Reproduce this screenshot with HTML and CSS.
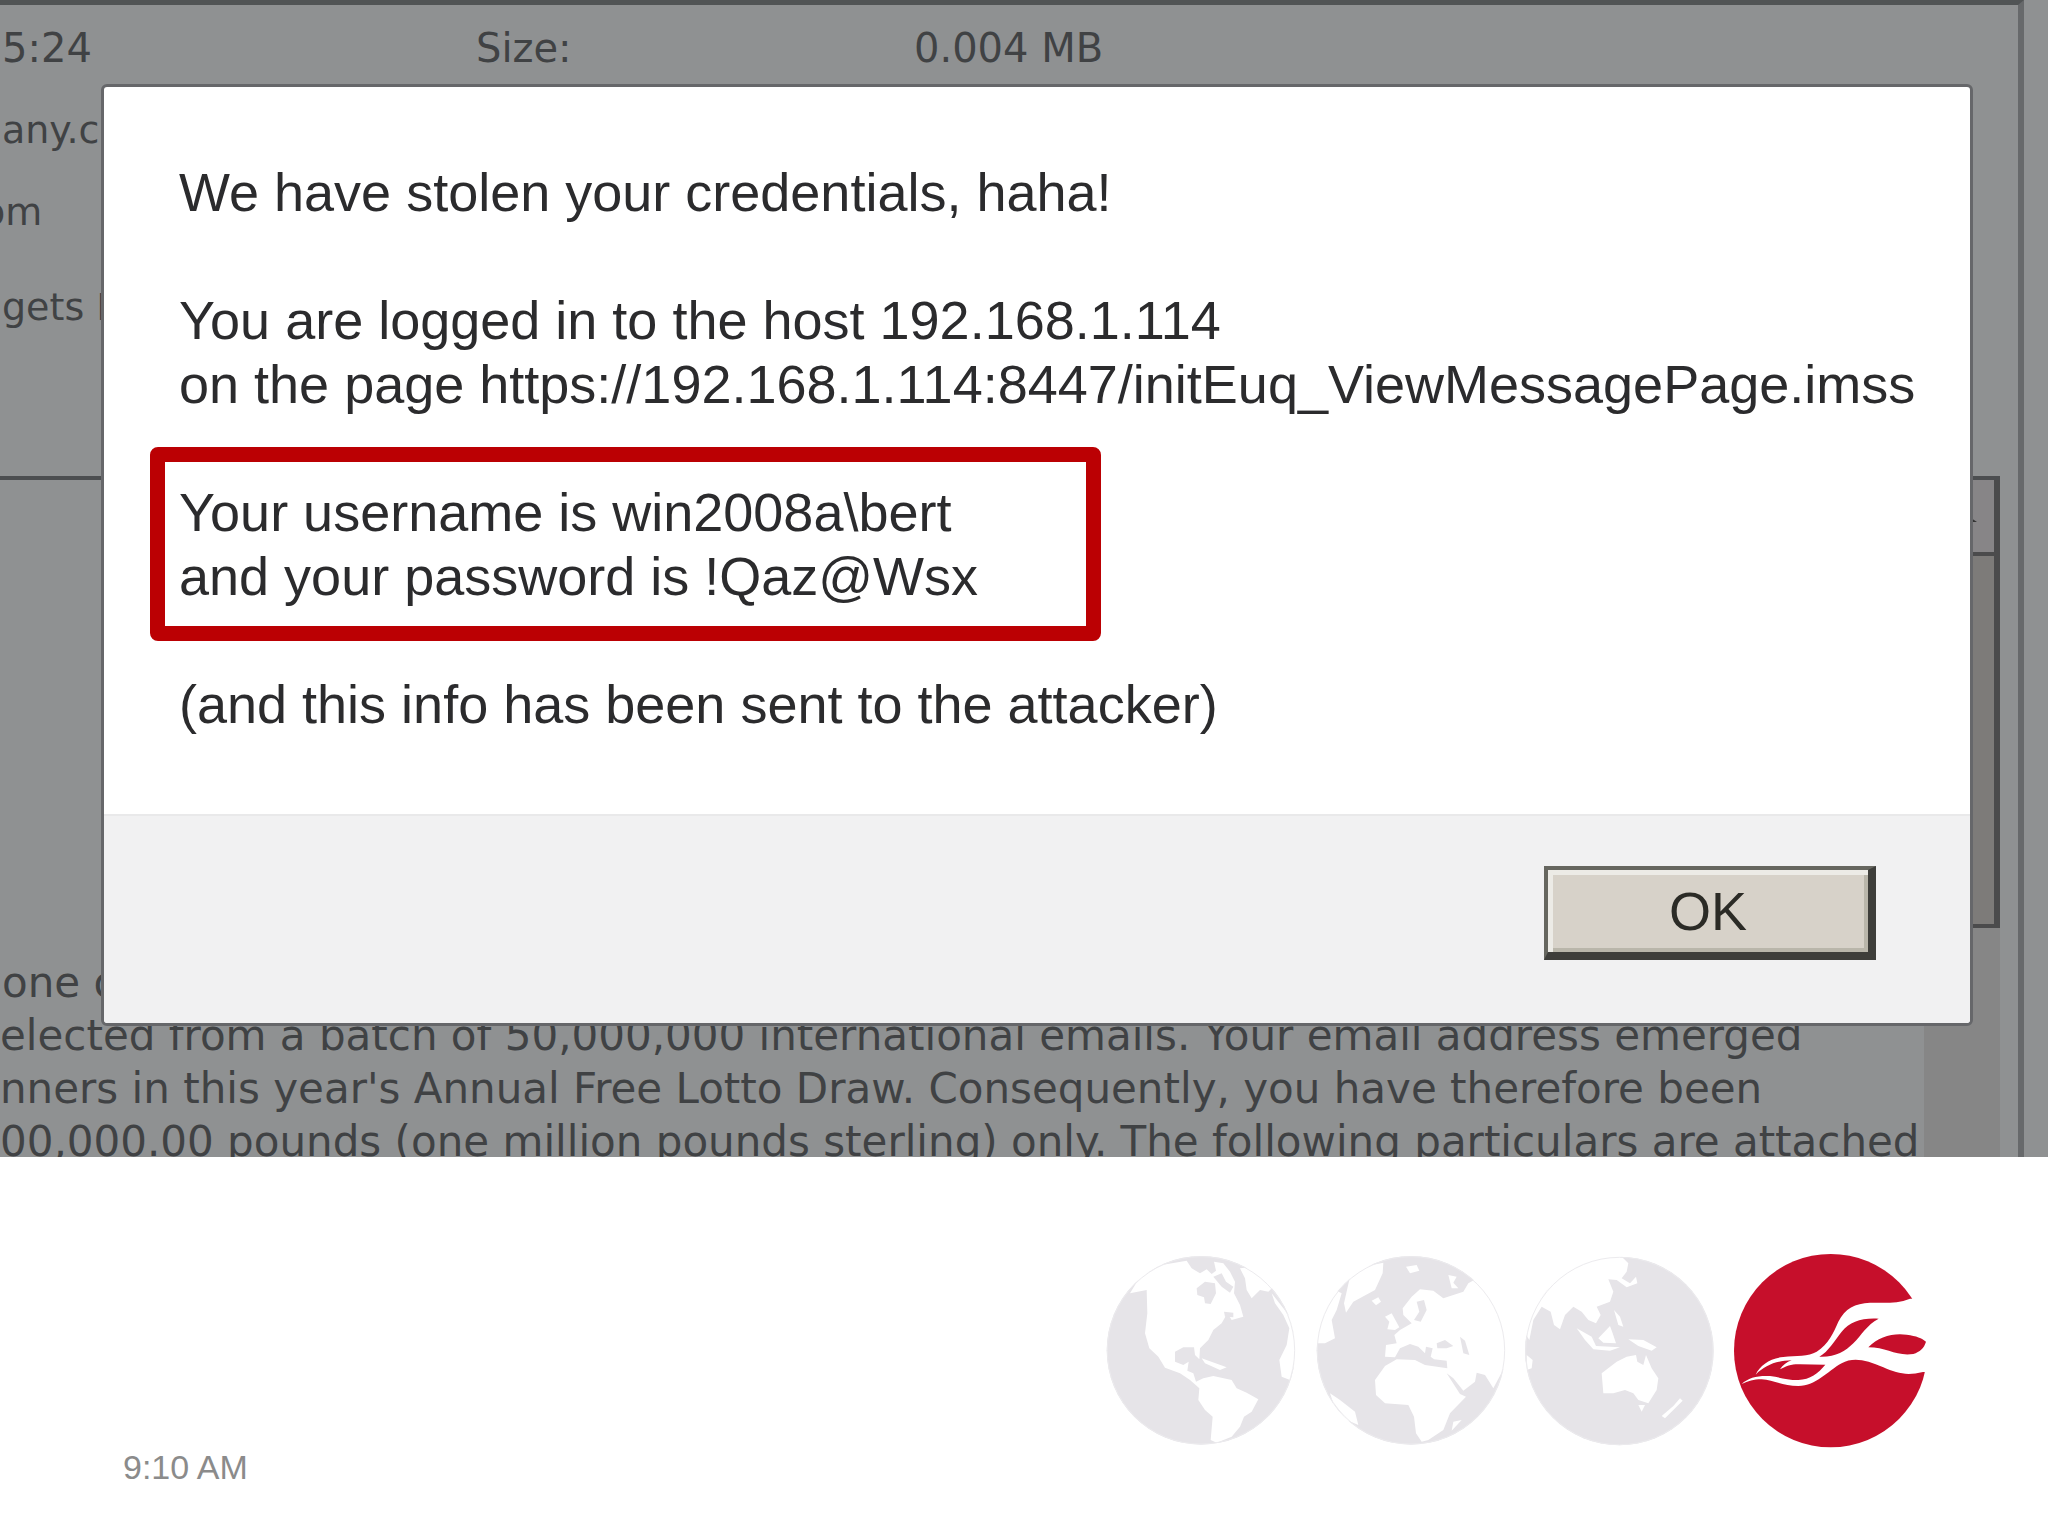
FILE: index.html
```html
<!DOCTYPE html>
<html lang="en">
<head>
<meta charset="utf-8">
<title>Stolen credentials</title>
<link rel="stylesheet" href="styles.css">
</head>
<body>
<main class="stage">
  <section class="mail" aria-label="Message">
    <div class="mail-frame">
      <div class="mail-head">
        <div class="row row-main"><span class="cell">5:24</span><span class="cell">Size:</span><span class="cell">0.004 MB</span></div>
        <div class="row">any.com</div>
        <div class="row row-cut">om</div>
        <div class="row row-tall">gets Inc</div>
      </div>
      <div class="mail-body">
        <div class="mail-text">
          <p class="line line-inset">one of</p>
          <p class="line">elected from a batch of 50,000,000 international emails. Your email address emerged</p>
          <p class="line">nners in this year's Annual Free Lotto Draw. Consequently, you have therefore been</p>
          <p class="line">00,000.00 pounds (one million pounds sterling) only. The following particulars are attached</p>
        </div>
        <div class="scroll">
          <div class="scroll-up"><svg class="arrow" viewBox="0 0 36 12"><path d="M0 12L18 0L36 12Z"/></svg></div>
          <div class="scroll-thumb"></div>
        </div>
      </div>
    </div>
  </section>

  <section class="dialog" role="alertdialog" aria-labelledby="msg">
    <div class="dialog-body">
      <p class="text" id="msg">We have stolen your credentials, haha!</p>
      <p class="text text-gap">You are logged in to the host 192.168.1.114<br>on the page https://192.168.1.114:8447/initEuq_ViewMessagePage.imss</p>
      <p class="marked">Your username is win2008a\bert<br>and your password is !Qaz@Wsx</p>
      <p class="text">(and this info has been sent to the attacker)</p>
    </div>
    <div class="dialog-foot"><button class="ok" type="button">OK</button></div>
  </section>
</main>

<footer class="foot">
  <time class="time">9:10 AM</time>
  <div class="globes">
    <svg class="globe" viewBox="15 15 630 630">
      <circle class="sea" cx="333" cy="331" r="283"/>
      <path class="land" d="M120 160L150 110L215 75L290 62L305 85L330 100L350 88L365 102L378 92L372 65L400 70L420 95L435 125L432 160L450 195L460 230L425 240L412 220L395 250L370 270L355 300L330 325L328 358L315 345L312 322L280 322L255 335L255 365L280 375L296 365L292 392L310 400L318 425L340 415L370 408L425 420L440 445L470 458L505 478L485 515L462 530L450 560L425 590L380 608L362 600L368 530L345 510L325 480L328 445L300 420L270 400L225 383L205 350L178 325L165 280L172 220L170 150Z"/>
      <path class="land" d="M450 85L500 80L550 140L535 155L510 150L485 175L470 150L465 115Z"/>
      <path class="land" d="M545 160L600 230L625 330L600 420L575 410L568 360L590 315L598 265L580 225L555 190Z"/>
      <path class="land" d="M335 355L410 382L390 390L345 370Z"/>
      <path class="sea" d="M320 145L345 125L375 130L378 160L362 192L345 190L342 172L322 165ZM370 110L395 100L408 125L430 140L420 158L395 140ZM402 215L430 218L430 232L405 230Z"/>
      <circle class="rim" cx="333" cy="331" r="281"/>
    </svg>
    <svg class="globe" viewBox="15 15 630 630">
      <circle class="sea" cx="333" cy="331" r="283"/>
      <path class="land" d="M250 68L248 100L225 150L160 185L138 218L132 190L150 110L190 80ZM318 80L350 75L358 92L330 100ZM215 182L235 172L243 185L228 196ZM105 150L125 160L110 210L95 240L105 295L75 310L45 310L60 220Z"/>
      <path class="land" d="M90 460L120 480L165 515L175 555L140 540L100 490Z"/>
      <path class="land" d="M255 230L275 220L298 262L285 270L262 268L268 245ZM540 110L505 130L490 155L430 175L400 152L360 148L335 170L308 205L310 225L335 250L300 270L283 285L290 310L258 315L255 350L285 352L300 325L330 312L355 320L375 340L378 320L398 325L392 350L402 358L440 362L442 385L375 375L345 360L290 358L255 378L225 420L228 465L255 490L325 495L342 530L348 580L365 605L385 600L430 570L450 520L498 470L480 462L440 400L460 415L490 452L525 425L530 398L555 405L580 445L620 370L620 280L590 190Z"/>
      <path class="land" d="M445 105L470 110L460 128L475 145L455 145ZM460 545L485 540L455 572Z"/>
      <path class="sea" d="M350 185L372 180L380 210L362 245L342 240L358 215ZM410 310L435 300L460 318L440 325L412 325ZM480 290L495 302L508 345L490 340Z"/>
      <circle class="rim" cx="333" cy="331" r="281"/>
    </svg>
    <svg class="globe" viewBox="15 15 630 630">
      <circle class="sea" cx="328" cy="333" r="283"/>
      <path class="land" d="M100 165L150 100L220 60L330 45L355 70L350 95L335 115L360 130L378 110L382 130L350 142L320 120L295 118L310 155L300 185L260 200L272 225L258 250L235 240L215 215L190 200L165 225L150 268L132 255L122 215L95 200L70 240L58 300L45 280L60 210Z"/>
      <path class="land" d="M200 265L245 290L258 318L330 322L300 332L250 328L225 300ZM265 295L300 258L308 280L318 310L280 308ZM312 210L330 230L340 260L325 255ZM355 298L400 300L440 322L425 332L385 318Z"/>
      <path class="land" d="M275 400L320 365L350 350L378 345L382 365L400 375L408 345L425 385L445 415L440 450L415 490L385 480L370 460L345 450L310 460L280 460ZM385 495L405 495L395 515ZM510 475L518 482L465 535L455 528L490 498ZM50 345L68 360L65 385L50 390Z"/>
      <circle class="rim" cx="328" cy="333" r="281"/>
    </svg>
    <svg class="globe" viewBox="15 15 630 630">
      <circle class="brand" cx="332" cy="332" r="290"/>
      <path class="cut" d="M65 432C85 412 115 406 150 408C180 412 200 420 235 420C270 418 295 400 316 374L240 373C215 372 200 378 180 388C187 376 200 366 215 361C170 362 135 375 107 404C120 376 150 355 190 351C230 346 265 350 290 335C325 312 340 280 355 245C375 205 405 190 450 188C490 188 530 192 570 176L655 176L655 398L609 396C560 408 530 400 490 382C440 360 400 350 365 370C320 395 290 437 235 438C190 438 160 420 125 418C100 418 85 424 65 432Z"/>
      <path class="brand" d="M298 350C325 335 345 300 365 275C390 245 425 233 476 236C440 255 425 285 400 310C375 335 345 352 298 350ZM445 322C475 290 520 278 560 284C590 288 605 294 618 305C612 325 600 335 580 342C530 350 500 322 445 322Z"/>
    </svg>
  </div>
</footer>
</body>
</html>
```
FILE: styles.css
```css
* { box-sizing: border-box; }
body {
  margin: 0;
  background: #fff;
  font-family: "Liberation Sans", Arial, sans-serif;
}
p { margin: 0; }

.stage { display: grid; overflow: hidden; }
.mail, .dialog { grid-area: 1 / 1; }

/* dimmed mail page behind the dialog */
.mail {
  display: flex;
  min-width: 0;
  height: 0;
  min-height: 100%;
  overflow: hidden;
  padding-right: 24px;
  background: #8f9192;
  color: #404244;
  font-family: "DejaVu Sans", Verdana, sans-serif;
  font-size: 38px;
  white-space: nowrap;
}
.mail-frame {
  flex: 1;
  min-width: 0;
  display: flex;
  flex-direction: column;
  padding-right: 18px;
  border-top: 5px solid #515455;
  border-right: 6px solid #67696b;
}
.mail-head { min-height: 471px; padding: 2px 0 0 2px; }
.row { line-height: 82px; }
.row-main { display: flex; font-size: 40px; }
.row-cut { text-indent: -20px; }
.cell { width: 438px; }
.cell:first-child { width: 474px; }
.row-tall { line-height: 108px; }
.mail-body {
  flex: 1;
  display: flex;
  min-height: 0;
  border-top: 4px solid #4c4e50;
}
.mail-text {
  flex: 1;
  min-width: 0;
  padding-top: 476px;
  font-size: 42px;
}
.line { line-height: 53px; }
.line-inset { padding-left: 2px; }
.scroll { width: 76px; background: #868686; }
.scroll-up, .scroll-thumb {
  border-right: 6px solid #4b4b4c;
  border-bottom: 4px solid #4b4b4c;
}
.scroll-up {
  display: flex;
  align-items: center;
  justify-content: center;
  height: 76px;
  background: #878587;
}
.arrow { width: 36px; height: 12px; fill: #333; }
.scroll-thumb { height: 372px; background: #7d7b79; }

.dialog {
  position: relative;
  margin: 84px 75px 131px 101px;
  border: 3px solid #66676a;
  border-radius: 6px;
  background: #fff;
  color: #2b2b2d;
  font-size: 54px;
  line-height: 64px;
}
.dialog-body { padding: 73px 0 78px 46px; }
.text { padding-left: 29px; }
.text-gap { margin-top: 64px; }
.marked {
  width: 951px;
  max-width: 100%;
  margin: 31px 0;
  padding: 18px 14px;
  border: 15px solid #bb0003;
  border-radius: 8px;
}
.dialog-foot {
  display: flex;
  justify-content: flex-end;
  padding: 52px 94px 63px;
  border-radius: 0 0 4px 4px;
  background: #f1f1f2;
  box-shadow: inset 0 2px 0 #e9e9ea;
}
.ok {
  width: 332px;
  height: 94px;
  padding: 0;
  border: solid #3e3e3a;
  border-width: 4px 8px 8px 4px;
  border-top-color: #66665f;
  border-left-color: #66665f;
  background: #d7d2c9;
  box-shadow: inset 5px 5px 0 #ecebe6, inset -4px -4px 0 #b9b6aa;
  color: #2b2b26;
  font: 54px "Liberation Sans", Arial, sans-serif;
}

.foot {
  display: flex;
  align-items: flex-end;
  justify-content: space-between;
  padding: 88px 113px 50px 123px;
}
.time { color: #8b8b8b; font-size: 34px; line-height: 38px; }
.globes { display: flex; margin-bottom: 31px; }
.globe { display: block; width: 210px; height: 210px; }
.sea { fill: #e6e4e8; }
.rim { fill: none; stroke: #ecebee; stroke-width: 3; }
.land, .cut { fill: #fff; }
.brand { fill: #c60f2b; }
```
